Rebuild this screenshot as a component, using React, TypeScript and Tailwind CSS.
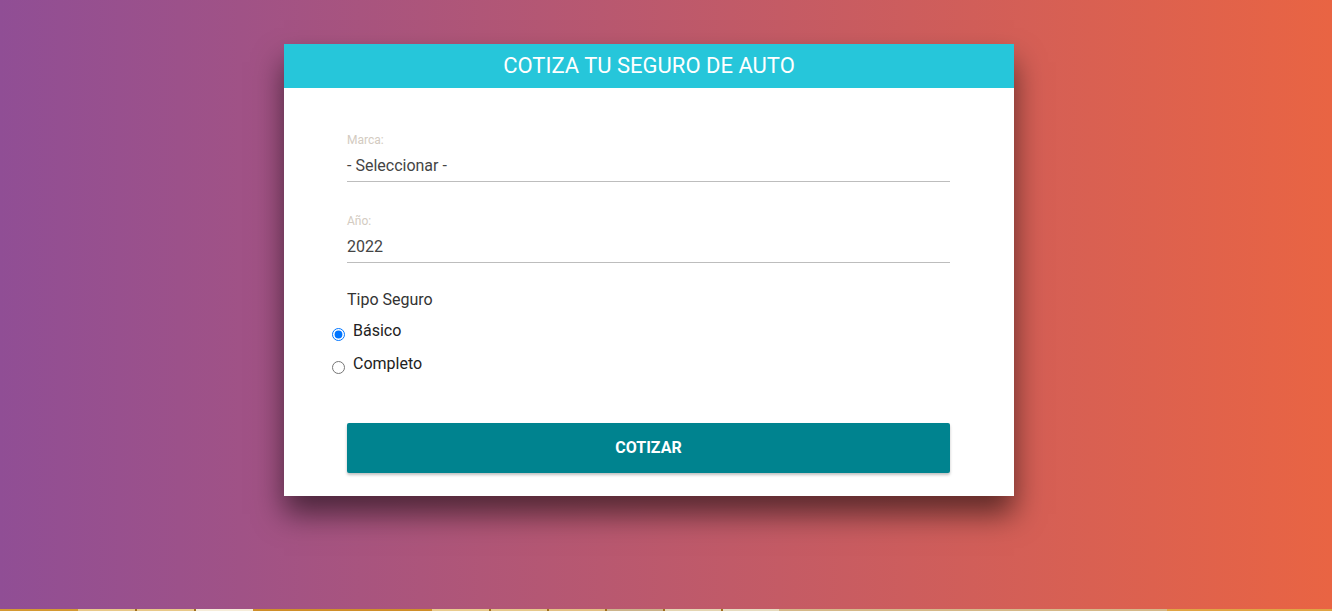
import { useState } from "react";

const strip = [
  { w: 80, c: "bg-[#d49a33]" },
  { w: 59, c: "bg-[#e8c98a]" },
  { w: 2, c: "bg-[#a0701f]" },
  { w: 59, c: "bg-[#e8c98a]" },
  { w: 2, c: "bg-[#a0701f]" },
  { w: 59, c: "bg-[#f5ecd9]" },
  { w: 185, c: "bg-[#cf8f2a]" },
  { w: 58, c: "bg-[#e9cc8f]" },
  { w: 2, c: "bg-[#a0701f]" },
  { w: 58, c: "bg-[#e6c98c]" },
  { w: 2, c: "bg-[#a0701f]" },
  { w: 58, c: "bg-[#e3c185]" },
  { w: 2, c: "bg-[#a0701f]" },
  { w: 58, c: "bg-[#ccb58c]" },
  { w: 2, c: "bg-[#a0701f]" },
  { w: 58, c: "bg-[#e4d6b3]" },
  { w: 2, c: "bg-[#a0701f]" },
  { w: 58, c: "bg-[#e6dcc0]" },
  { w: 400, c: "bg-[#d5b98a]" },
  { w: 170, c: "bg-[#e0a545]" },
];

export default function App() {
  const [plan, setPlan] = useState("basico");

  return (
    <div className="h-[611px] flex flex-col font-['Roboto',sans-serif] overflow-hidden">
      <div className="h-[609px] bg-[linear-gradient(to_right,#904e95,#e96443)] flex pl-[284px] pt-[44px]">
        <div className="w-[730px] h-[452px] bg-white shadow-[0_18px_28px_rgba(0,0,0,0.55)]">
          <header className="h-[44px] bg-[#26c6da] flex items-center justify-center">
            <h1 className="text-white text-[22px] leading-none">COTIZA TU SEGURO DE AUTO</h1>
          </header>

          <form className="pl-[63px] pr-[64px] pt-[45px]" onSubmit={(e) => e.preventDefault()}>
            {/* Marca */}
            <div className="border-b border-[#bdbdbd] pb-[6px]">
              <label className="block text-[12px] leading-[14px] text-[#d3cbc1]">Marca:</label>
              <div className="mt-[9px] text-[16px] leading-[19px] text-[#444]">- Seleccionar -</div>
            </div>

            {/* Año */}
            <div className="border-b border-[#bdbdbd] pb-[6px] mt-[32px]">
              <label className="block text-[12px] leading-[14px] text-[#d3cbc1]">Año:</label>
              <div className="mt-[9px] text-[16px] leading-[19px] text-[#444]">2022</div>
            </div>

            {/* Tipo seguro */}
            <p className="mt-[27px] text-[16px] leading-[19px] text-[#333]">Tipo Seguro</p>
            <div className="mt-[12px] flex flex-col gap-[13px] -ml-[18px]">
              {[
                { id: "basico", label: "Básico" },
                { id: "completo", label: "Completo" },
              ].map((o) => (
                <label key={o.id} className="flex items-start gap-[5px] text-[16px] leading-[19px] text-[#222]">
                  <input
                    type="radio"
                    name="plan"
                    checked={plan === o.id}
                    onChange={() => setPlan(o.id)}
                    className="w-[13px] h-[13px] mt-[7px] mx-[3px] accent-[#0075ff]"
                  />
                  {o.label}
                </label>
              ))}
            </div>

            <button
              type="submit"
              className="mt-[49px] w-full h-[50px] bg-[#00838f] text-white font-bold text-[16px] rounded-[2px] shadow-[0_2px_3px_rgba(0,0,0,0.25)]"
            >
              COTIZAR
            </button>
          </form>
        </div>
      </div>
      <div className="h-[2px] flex">
        {strip.map((s, i) => (
          <div key={i} className={s.c} style={{ width: s.w }} />
        ))}
      </div>
    </div>
  );
}
